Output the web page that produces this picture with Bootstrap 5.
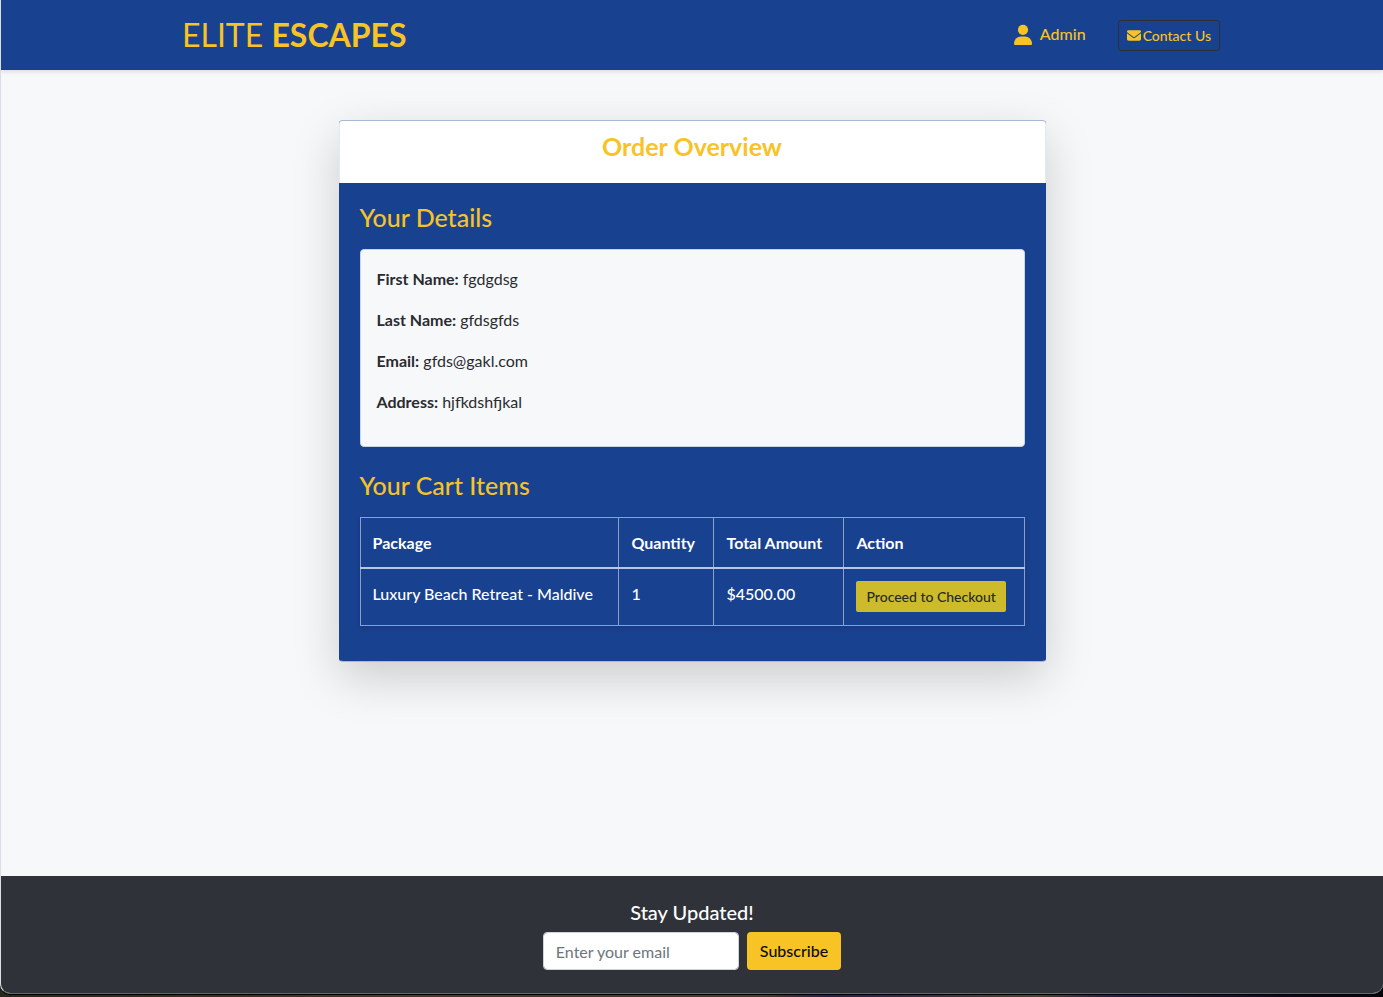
<!DOCTYPE html>
<html lang="en">
<head>
<meta charset="utf-8">
<meta name="viewport" content="width=device-width, initial-scale=1">
<title>Elite Escapes - Order Overview</title>
<link href="https://cdn.jsdelivr.net/npm/bootstrap@5.3.0/dist/css/bootstrap.min.css" rel="stylesheet">
<style>
:root{--navy:#18418f;--gold:#f7c325}
body{font-family:Lato,sans-serif;font-size:16px;line-height:25px;color:#292b2f;min-height:100vh;padding-bottom:3px;background:linear-gradient(90deg,#29271c 0,#493a2b 30%,#463b2c 55%,#282148 60%,#4b4336 75%,#282142 80%,#100b1d 92%,#05040b 100%)}
.app-window{background:#f7f8fa;border-left:1px solid #d9dee6;border-bottom:1px solid #65686b;border-radius:0 0 10px 10px;box-shadow:0 1px 0 #000;overflow:hidden}
.site-nav{background:var(--navy);min-height:70px;box-shadow:0 2px 4px #0000001a;margin-left:-1px;border-left:1px solid #4a6cab}
.nav-inner{padding-left:60px;padding-right:42px}
.site-nav .navbar-brand{color:var(--gold);font-size:32px;line-height:44px}
.gold{color:var(--gold)}
.admin-link{line-height:24px;padding-bottom:2px}
.contact-btn{--bs-btn-color:var(--gold);--bs-btn-border-color:#2e3036;--bs-btn-hover-color:var(--gold);gap:2px;font-size:14px;line-height:21px;padding:4px 8px;border-radius:3px;font-weight:500}
.order-wrap{padding:50px 12px}
.order-card{max-width:707px;background:var(--navy);border:1px solid #a7b9d5;border-left-color:var(--navy);border-right-color:var(--navy);border-radius:4px;box-shadow:0 16px 48px #0000002d}
.order-card .card-header{background:#fff;border:0;border-radius:3px 3px 0 0;padding:10px 20px 22px;margin:0 -1px;border-left:1px solid #e4e8ef;border-right:1px solid #e4e8ef}
.order-card h2{font-size:25px;line-height:30px;font-weight:700}
.order-card h3{font-size:25px;line-height:30px;font-weight:500;margin-bottom:16px}
.order-card .card-body{padding:20px 20px 19px}
.order-card .card-body h3{line-height:28px;margin-bottom:18px}
.details-box{background:#f7f8fa;border:1px solid #c9d4e5;border-radius:4px;padding:16px;margin-bottom:24px}
.cart-table{--bs-table-bg:transparent;--bs-table-color:#fff;border-color:#8aa0c8;margin-bottom:16px;box-shadow:0 2px 5px #0000001f}
.cart-table th,.cart-table td{padding:12px;color:#fff;font-weight:500;vertical-align:top}
.cart-table th{font-weight:700}
.cart-table thead th{border-bottom:2px solid #bac8df}
.cart-table .c1{width:39%}.cart-table .c2{width:95px}.cart-table .c3{width:130px}
.cart-table tbody td{padding-bottom:13px}
.checkout-btn{background:#cebb2c;color:#28292b;border:0;border-radius:2px;font-size:14px;line-height:21px;padding:5px 10px;font-weight:500;vertical-align:top}
.site-footer{background:#2f3239;padding:24px 12px 23px}
.site-footer h4{font-size:20px;line-height:24px;font-weight:500}
.mail-input{width:196px;height:38px;border-radius:4px;border-color:#ced4da;padding:6px 12px;line-height:24px}
.mail-input::placeholder{color:#6c757d}
.subscribe-btn{background:var(--gold);color:#0b0b0b;height:38px;border:0;border-radius:4px;padding:6px 13px;font-weight:500}
</style>
</head>
<body class="d-flex flex-column">
<div class="app-window flex-grow-1 d-flex flex-column">
  <nav class="site-nav navbar p-0">
    <div class="container-xl nav-inner">
      <a class="navbar-brand m-0 p-0" href="#">ELITE <strong>ESCAPES</strong></a>
      <div class="d-flex align-items-center">
        <a class="gold admin-link text-decoration-none d-flex align-items-center gap-2 fw-medium me-2 pe-4" href="#">
          <svg width="18" height="21" viewBox="0 0 18 21" fill="currentColor" aria-hidden="true"><circle cx="9" cy="5.8" r="5.1"/><path d="M7.2 12.500h3.600c4 0 7.200 3.200 7.200 7.200 0 .8-.5 1.300-1.300 1.300H1.300C.5 21 0 20.500 0 19.700 0 15.700 3.200 12.500 7.200 12.500z"/></svg>
          Admin</a>
        <button type="button" class="btn contact-btn d-flex align-items-center">
          <svg width="14" height="11" viewBox="0 0 512 384" fill="currentColor" aria-hidden="true"><path d="M48 0C21.500 0 0 21.500 0 48c0 15.100 7.100 29.300 19.200 38.400l217.600 163.200c11.400 8.500 27 8.500 38.400 0L492.800 86.400C504.900 77.300 512 63.100 512 48c0-26.500-21.500-48-48-48H48zM0 112v208c0 35.300 28.700 64 64 64h384c35.300 0 64-28.700 64-64V112L294.400 275.200c-22.800 17.100-54 17.100-76.800 0L0 112z"/></svg>Contact Us</button>
      </div>
    </div>
  </nav>
  <main class="order-wrap flex-grow-1">
    <div class="card order-card mx-auto">
      <div class="card-header text-center"><h2 class="gold m-0">Order Overview</h2></div>
      <div class="card-body">
        <h3 class="gold">Your Details</h3>
        <div class="details-box">
          <p><strong>First Name:</strong> fgdgdsg</p>
          <p><strong>Last Name:</strong> gfdsgfds</p>
          <p><strong>Email:</strong> gfds@gakl.com</p>
          <p><strong>Address:</strong> hjfkdshfjkal</p>
        </div>
        <h3 class="gold">Your Cart Items</h3>
        <table class="table table-bordered cart-table">
          <thead><tr><th class="c1" scope="col">Package</th><th class="c2" scope="col">Quantity</th><th class="c3" scope="col">Total Amount</th><th scope="col">Action</th></tr></thead>
          <tbody><tr><td>Luxury Beach Retreat - Maldive</td><td>1</td><td>$4500.00</td><td><button type="button" class="btn checkout-btn">Proceed to Checkout</button></td></tr></tbody>
        </table>
      </div>
    </div>
  </main>
  <footer class="site-footer text-center text-white">
    <h4>Stay Updated!</h4>
    <form class="d-flex justify-content-center gap-2">
      <input id="email" type="email" class="form-control mail-input" placeholder="Enter your email" aria-label="Email">
      <button type="submit" class="btn subscribe-btn">Subscribe</button>
    </form>
  </footer>
</div>
<script src="https://cdn.jsdelivr.net/npm/bootstrap@5.3.0/dist/js/bootstrap.bundle.min.js"></script>
</body>
</html>
